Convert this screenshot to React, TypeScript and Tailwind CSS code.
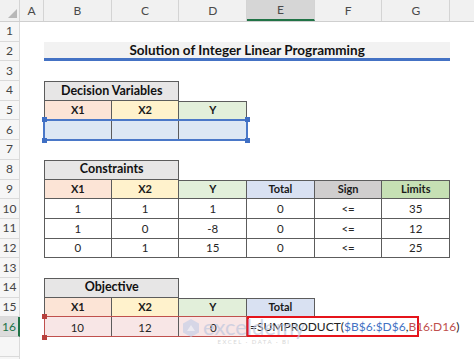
import React from "react";

const CELL = "w-[67.7px] shrink-0 flex items-center justify-center text-[11.5px] text-[#262626]";
const HCELL = "w-[67.7px] shrink-0 flex items-center justify-center text-[11px] font-bold text-[#1a1a1a]";
const BD = "border-[#5c5c5c]";

function Row({ n, active, children }: { n?: number; active?: boolean; children?: React.ReactNode }) {
  return (
    <div className="flex h-[19.7px]">
      {active ? (
        <div className="w-[20px] shrink-0 flex items-center justify-center text-[12px] bg-[#dcdcdc] text-[#217346] border-r-2 border-[#217346] border-b border-b-[#d0d0d0]">
          {n}
        </div>
      ) : (
        <div className="w-[20px] shrink-0 flex items-center justify-center text-[12px] bg-[#f6f6f6] text-[#444] border-r border-b border-[#dadada]">
          {n}
        </div>
      )}
      <div className="w-[24px] shrink-0" />
      {children}
    </div>
  );
}

function Watermark() {
  return (
    <div className="absolute left-[181px] top-[318px] flex items-start gap-[2px] opacity-70 pointer-events-none">
      <svg width="20" height="20" viewBox="0 0 20 20">
        <path d="M10 1 L18 5.5 L18 14.5 L10 19 L2 14.5 L2 5.5 Z" fill="#c9d0e6" />
        <path d="M6 13 L10 7 L14 13 Z" fill="#e8ecf6" />
      </svg>
      <div className="flex flex-col items-center leading-none">
        <span className="text-[22px] text-[#c0c8de] font-['Lato',sans-serif] leading-[18px]">exceldemy</span>
        <span className="text-[6px] tracking-[1.5px] text-[#c8c8c8] mt-[3px]">EXCEL · DATA · BI</span>
      </div>
    </div>
  );
}

export default function App() {
  return (
    <div className="relative w-[474px] h-[359px] overflow-hidden bg-white font-['Lato',sans-serif]">
      {/* column headers */}
      <div className="flex h-[22px] bg-[#f1f1f1] border-b border-[#cfcfcf] text-[12px] text-[#4a4a4a]">
        <div className="w-[20px] shrink-0 relative border-r border-[#d4d4d4]">
          <svg className="absolute right-[2px] bottom-[3px]" width="9" height="9" viewBox="0 0 9 9">
            <path d="M9 0 L9 9 L0 9 Z" fill="#b8b8b8" />
          </svg>
        </div>
        <div className="w-[24px] shrink-0 flex items-center justify-center border-r border-[#d4d4d4]">A</div>
        <div className="w-[67.7px] shrink-0 flex items-center justify-center border-r border-[#d4d4d4]">B</div>
        <div className="w-[67.7px] shrink-0 flex items-center justify-center border-r border-[#d4d4d4]">C</div>
        <div className="w-[67.7px] shrink-0 flex items-center justify-center border-r border-[#d4d4d4]">D</div>
        <div className="w-[67.7px] shrink-0 flex items-center justify-center border-r border-[#d4d4d4] bg-[#d6d6d6] border-b-2 border-b-[#217346]">E</div>
        <div className="w-[67.7px] shrink-0 flex items-center justify-center border-r border-[#d4d4d4]">F</div>
        <div className="w-[67.7px] shrink-0 flex items-center justify-center border-r border-[#d4d4d4]">G</div>
        <div className="flex-1" />
      </div>

      <Row n={1} />
      <Row n={2}>
        <div className="w-[406.2px] shrink-0 flex items-center justify-center bg-[#f2f2f2] border-b-[3px] border-[#4472c4] text-[13.5px] font-bold text-[#111]">
          Solution of Integer Linear Programming
        </div>
      </Row>
      <Row n={3} />
      <Row n={4}>
        <div className={`w-[135.4px] shrink-0 flex items-center justify-center bg-[#e7e6e6] border ${BD} text-[12.5px] font-bold text-[#111]`}>
          Decision Variables
        </div>
      </Row>
      <Row n={5}>
        <div className={`${HCELL} bg-[#fce4d6] border-l border-r border-b ${BD}`}>X1</div>
        <div className={`${HCELL} bg-[#fff2cc] border-r border-b ${BD}`}>X2</div>
        <div className={`${HCELL} bg-[#e2efda] border-t border-r border-b ${BD}`}>Y</div>
      </Row>
      <Row n={6}>
        <div className="relative flex">
          <div className={`${CELL} bg-[#dde8f4] border-l border-r border-b ${BD}`} />
          <div className={`${CELL} bg-[#dde8f4] border-r border-b ${BD}`} />
          <div className={`${CELL} bg-[#dde8f4] border-r border-b ${BD}`} />
          <div className="absolute inset-[-1px] border-2 border-[#4a78c8] pointer-events-none" />
          <div className="absolute left-[-2px] top-[-3px] w-[5px] h-[5px] bg-[#3f6fc4]" />
          <div className="absolute left-[-2px] bottom-[-3px] w-[5px] h-[5px] bg-[#3f6fc4]" />
          <div className="absolute right-[-3px] top-[-3px] w-[5px] h-[5px] bg-[#3f6fc4]" />
          <div className="absolute right-[-3px] bottom-[-3px] w-[5px] h-[5px] bg-[#3f6fc4]" />
        </div>
      </Row>
      <Row n={7} />
      <Row n={8}>
        <div className={`w-[135.4px] shrink-0 flex items-center justify-center bg-[#e7e6e6] border ${BD} text-[12.5px] font-bold text-[#111]`}>
          Constraints
        </div>
      </Row>
      <Row n={9}>
        <div className={`${HCELL} bg-[#fce4d6] border-l border-r border-b ${BD}`}>X1</div>
        <div className={`${HCELL} bg-[#fff2cc] border-r border-b ${BD}`}>X2</div>
        <div className={`${HCELL} bg-[#e2efda] border-t border-r border-b ${BD}`}>Y</div>
        <div className={`${HCELL} bg-[#d9e1f2] border-t border-r border-b ${BD}`}>Total</div>
        <div className={`${HCELL} bg-[#d0cece] border-t border-r border-b ${BD}`}>Sign</div>
        <div className={`${HCELL} bg-[#c6e0b4] border-t border-r border-b ${BD}`}>Limits</div>
      </Row>
      {[
        [10, "1", "1", "1", "0", "<=", "35"],
        [11, "1", "0", "-8", "0", "<=", "12"],
        [12, "0", "1", "15", "0", "<=", "25"],
      ].map((r) => (
        <Row key={r[0] as number} n={r[0] as number}>
          <div className={`${CELL} border-l border-r border-b ${BD}`}>{r[1]}</div>
          <div className={`${CELL} border-r border-b ${BD}`}>{r[2]}</div>
          <div className={`${CELL} border-r border-b ${BD}`}>{r[3]}</div>
          <div className={`${CELL} border-r border-b ${BD}`}>{r[4]}</div>
          <div className={`${CELL} border-r border-b ${BD} text-[10px] text-[#555]`}>{r[5]}</div>
          <div className={`${CELL} border-r border-b ${BD}`}>{r[6]}</div>
        </Row>
      ))}
      <Row n={13} />
      <Row n={14}>
        <div className={`w-[135.4px] shrink-0 flex items-center justify-center bg-[#e7e6e6] border ${BD} text-[12.5px] font-bold text-[#111]`}>
          Objective
        </div>
      </Row>
      <Row n={15}>
        <div className={`${HCELL} bg-[#fce4d6] border-l border-r border-b ${BD}`}>X1</div>
        <div className={`${HCELL} bg-[#fff2cc] border-r border-b ${BD}`}>X2</div>
        <div className={`${HCELL} bg-[#e2efda] border-t border-r border-b ${BD}`}>Y</div>
        <div className={`${HCELL} bg-[#d9e1f2] border-t border-r border-b ${BD}`}>Total</div>
      </Row>
      <Row n={16} active>
        <div className="relative flex">
          <div className={`${CELL} bg-[#f8e6e6] border-r ${BD}`}>10</div>
          <div className={`${CELL} bg-[#f8e6e6] border-r ${BD}`}>12</div>
          <div className={`${CELL} bg-[#f8e6e6] text-[#666]`}>0</div>
          <div className="absolute inset-x-0 top-[-1px] bottom-0 border-[1.5px] border-[#c0504d] pointer-events-none" />
          <div className="absolute left-[-2px] top-[-3px] w-[5px] h-[5px] bg-[#b8403c]" />
          <div className="absolute left-[-2px] bottom-[-3px] w-[5px] h-[5px] bg-[#b8403c]" />
        </div>
        <div className="shrink-0 w-[172px] h-[21px] mt-[-1px] border-2 border-[#e5141b] flex items-center pl-[1px] whitespace-nowrap text-[12px] text-[#222] bg-white">
          =SUMPRODUCT(<span className="text-[#4472c4]">$B$6:$D$6</span>,<span className="text-[#c0504d]">B16:D16</span>)
        </div>
      </Row>
      <Row n={undefined} />
      <Row n={undefined} />
      <Watermark />
    </div>
  );
}
